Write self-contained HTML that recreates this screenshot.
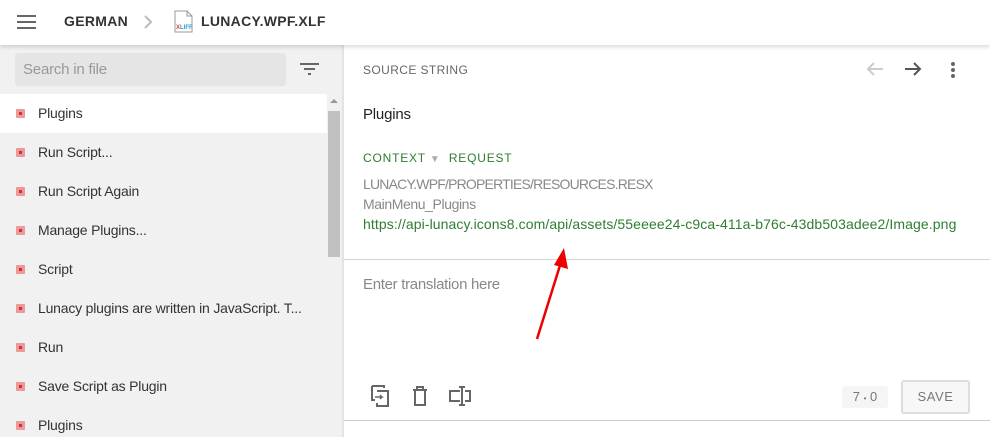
<!DOCTYPE html>
<html><head><style>
*{margin:0;padding:0;box-sizing:border-box}
body{width:990px;height:437px;overflow:hidden;background:#fff;font-family:"Liberation Sans",sans-serif;position:relative;color:#333}
.top{position:absolute;left:0;top:0;width:990px;height:45px;background:#fff;box-shadow:0 2px 4px rgba(0,0,0,.15);z-index:2}
.side{position:absolute;left:0;top:45px;width:342px;height:392px;background:#f1f1f1}
.search{position:absolute;left:15px;top:8px;width:271px;height:33px;background:#e5e5e5;border-radius:3px;color:#999;font-size:15px;padding:8px 8px;letter-spacing:-.2px}
.item{position:absolute;left:0;width:327px;height:39px;font-size:14px;color:#333;padding-left:38px;line-height:39px;white-space:nowrap;overflow:hidden;letter-spacing:-.2px}
.item::before{content:"";position:absolute;left:16px;top:15px;width:9px;height:9px;background:#e99;border-radius:1px}
.item::after{content:"";position:absolute;left:19px;top:18px;width:3px;height:3px;background:#c33}
.sb{position:absolute;left:327px;top:49px;width:14px;height:343px;background:#f1f1f1}
.thumb{position:absolute;left:328px;top:66px;width:12px;height:146px;background:#c1c1c1}
.main{position:absolute;left:342px;top:45px;width:648px;height:392px;border-left:2px solid #e3e3e3}
.t{position:absolute;white-space:nowrap}
.green{color:#2e7d32}
</style></head><body>
<div class="top">
<svg style="position:absolute;left:17px;top:14px" width="20" height="16"><rect y="1" width="19" height="2" fill="#666"/><rect y="7" width="19" height="2" fill="#666"/><rect y="13" width="19" height="2" fill="#666"/></svg>
<div class="t" style="left:64px;top:13px;font-size:14px;font-weight:bold;color:#333;letter-spacing:.3px">GERMAN</div>
<svg style="position:absolute;left:143px;top:15px" width="10" height="14"><path d="M2 1l6 6-6 6" stroke="#bbb" stroke-width="2" fill="none"/></svg>
<svg style="position:absolute;left:174px;top:10px" width="20" height="23"><path d="M1 1h12l5 5v16H1z" fill="#fff" stroke="#999"/><path d="M13 1v5h5" fill="none" stroke="#999"/><text x="2" y="19" font-size="6" font-weight="bold" fill="#e33" font-family="Liberation Sans">X</text><text x="6" y="19" font-size="6" font-weight="bold" fill="#39c" font-family="Liberation Sans">LIFF</text></svg>
<div class="t" style="left:201px;top:13px;font-size:14px;font-weight:bold;color:#333;letter-spacing:.3px">LUNACY.WPF.XLF</div>
</div>
<div class="side">
<div class="search">Search in file</div>
<svg style="position:absolute;left:300px;top:18px" width="20" height="14"><rect width="19" height="2" fill="#666"/><rect x="4" y="5" width="11" height="2" fill="#666"/><rect x="8" y="10" width="3" height="2" fill="#666"/></svg>
<div class="item" style="top:49px;background:#fff">Plugins</div>
<div class="item" style="top:88px">Run Script...</div>
<div class="item" style="top:127px">Run Script Again</div>
<div class="item" style="top:166px">Manage Plugins...</div>
<div class="item" style="top:205px">Script</div>
<div class="item" style="top:244px;width:318px;text-overflow:ellipsis">Lunacy plugins are written in JavaScript. T...</div>
<div class="item" style="top:283px">Run</div>
<div class="item" style="top:322px">Save Script as Plugin</div>
<div class="item" style="top:361px">Plugins</div>
<div class="sb"></div><div class="thumb"></div>
<svg style="position:absolute;left:330px;top:53px" width="8" height="6"><path d="M0 5l4-4 4 4z" fill="#999"/></svg>
</div>
<div class="main">
<div class="t" style="left:19px;top:18px;font-size:12px;color:#666;letter-spacing:.4px">SOURCE STRING</div>
<svg style="position:absolute;left:522px;top:16px" width="18" height="16"><path d="M17 8H2M8 2L2 8l6 6" stroke="#ccc" stroke-width="2" fill="none"/></svg>
<svg style="position:absolute;left:560px;top:16px" width="18" height="16"><path d="M1 8h15M10 2l6 6-6 6" stroke="#555" stroke-width="2" fill="none"/></svg>
<svg style="position:absolute;left:606px;top:16px" width="6" height="18"><circle cx="3" cy="3" r="2" fill="#666"/><circle cx="3" cy="9" r="2" fill="#666"/><circle cx="3" cy="15" r="2" fill="#666"/></svg>
<div class="t" style="left:19px;top:61px;font-size:15px;color:#222;letter-spacing:-.2px">Plugins</div>
<div class="t green" style="left:19px;top:106px;font-size:12px;letter-spacing:.8px">CONTEXT <span style="color:#aaa;font-size:10px">▼</span>&nbsp; REQUEST</div>
<div class="t" style="left:19px;top:131px;font-size:14px;color:#888;letter-spacing:-.8px">LUNACY.WPF/PROPERTIES/RESOURCES.RESX</div>
<div class="t" style="left:19px;top:151px;font-size:14px;color:#888;letter-spacing:-.4px">MainMenu_Plugins</div>
<div class="t green" style="left:19px;top:171px;font-size:14px;letter-spacing:.1px">https://api-lunacy.icons8.com/api/assets/55eeee24-c9ca-411a-b76c-43db503adee2/Image.png</div>
<div style="position:absolute;left:0;top:214px;width:648px;height:1px;background:#d5d5d5"></div>
<div class="t" style="left:19px;top:231px;font-size:15px;color:#888;letter-spacing:-.3px">Enter translation here</div>
<svg style="position:absolute;left:180px;top:198px" width="50" height="100"><path d="M13 96L38 16" stroke="#e00" stroke-width="2.5"/><path d="M40 5L30 22l14 4z" fill="#e00"/></svg>
<svg style="position:absolute;left:26px;top:340px" width="20" height="22"><path d="M2 1h12v2M2 1v14h3M7 6h11v15H7v-3" stroke="#666" stroke-width="2" fill="none"/><path d="M5 12h7l-2-2m2 2l-2 2" stroke="#666" stroke-width="1.5" fill="none"/></svg>
<svg style="position:absolute;left:68px;top:341px" width="16" height="20"><path d="M1 4h14M5 4V1h6v3M3 4v15h10V4" stroke="#666" stroke-width="2" fill="none"/></svg>
<svg style="position:absolute;left:104px;top:341px" width="24" height="20"><path d="M12 5H2v10h10M17 5h5v10h-5M14 1v18M11 1h6M11 19h6" stroke="#666" stroke-width="2" fill="none"/></svg>
<div style="position:absolute;left:498px;top:341px;width:46px;height:22px;background:#f5f5f5;border-radius:3px;font-size:13px;color:#777;text-align:center;line-height:22px">7 <span style="font-size:8px">•</span> 0</div>
<div style="position:absolute;left:557px;top:335px;width:69px;height:34px;border:2px solid #ddd;border-radius:3px;background:#f7f7f7;font-size:13px;color:#777;text-align:center;line-height:30px;letter-spacing:.6px">SAVE</div>
<div style="position:absolute;left:0;top:375px;width:648px;height:1px;background:#ccc"></div>
</div>
</body></html>
